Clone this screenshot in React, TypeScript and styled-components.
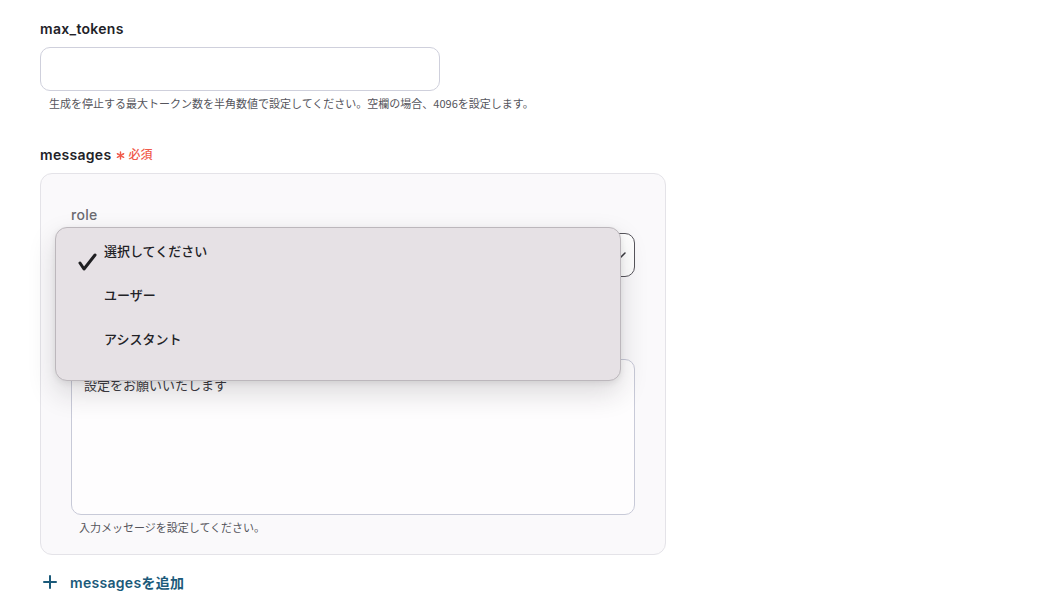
import React from "react";
import styled, { createGlobalStyle } from "styled-components";

const Global = createGlobalStyle`
  html, body { margin: 0; padding: 0; background: #ffffff; }
  body {
    font-family: Inter, "Noto Sans CJK JP", sans-serif;
    color: #222228;
    -webkit-font-smoothing: antialiased;
  }
  * { box-sizing: border-box; }
`;

const Page = styled.div`
  width: 1058px;
  height: 614px;
  overflow: hidden;
  padding: 20px 0 0 40px;
`;

const Field = styled.div<{ $gap?: number }>`
  display: flex;
  flex-direction: column;
  margin-bottom: ${(p) => p.$gap ?? 0}px;
`;

const Label = styled.div<{ $muted?: boolean }>`
  font-size: 14px;
  font-weight: ${(p) => (p.$muted ? 500 : 600)};
  color: ${(p) => (p.$muted ? "#6b6a70" : "#222228")};
  letter-spacing: 0.3px;
  line-height: 18px;
  display: flex;
  align-items: center;
  gap: 4px;
  margin-bottom: 9px;
`;

const Required = styled.span`
  color: #f05a4a;
  font-size: 12px;
  font-weight: 500;
  letter-spacing: 0;
  display: inline-flex;
  align-items: center;
  gap: 3px;
  margin-left: 1px;
`;

const Input = styled.div<{ $w: number }>`
  width: ${(p) => p.$w}px;
  height: 44px;
  border: 1px solid #cfd0dc;
  border-radius: 10px;
  background: #fff;
`;

const Help = styled.div<{ $indent: number }>`
  font-size: 11px;
  color: #55555c;
  line-height: 14px;
  margin-top: 5px;
  padding-left: ${(p) => p.$indent}px;
  font-family: "Noto Sans CJK JP", Inter, sans-serif;
`;

const Card = styled.div`
  width: 626px;
  background: #faf9fb;
  border: 1px solid #e4e3e8;
  border-radius: 12px;
  padding: 32px 30px 20px 30px;
  display: flex;
  flex-direction: column;
`;

const SelectWrap = styled.div`
  position: relative;
`;

const SelectBox = styled.div`
  width: 564px;
  height: 44px;
  border: 1px solid #57555c;
  border-radius: 10px;
  background: #fff;
  display: flex;
  align-items: center;
  justify-content: flex-end;
  padding-right: 6px;
`;

const Menu = styled.div`
  position: absolute;
  left: -16px;
  top: -6px;
  width: 566px;
  height: 154px;
  background: #e6e1e5;
  border: 1px solid #bcb7bc;
  border-radius: 12px;
  box-shadow: 0 12px 28px rgba(40, 30, 40, 0.16), 0 2px 6px rgba(0, 0, 0, 0.08);
  padding-top: 13px;
  display: flex;
  flex-direction: column;
  z-index: 5;
`;

const MenuItem = styled.div`
  height: 44px;
  display: flex;
  align-items: flex-start;
  padding-left: 48px;
  position: relative;
  font-size: 13px;
  font-weight: 500;
  color: #222226;
  line-height: 20px;
  font-family: "Noto Sans CJK JP", Inter, sans-serif;
`;

const Check = styled.svg`
  position: absolute;
  left: 20px;
  top: 10px;
`;

const TextArea = styled.div`
  width: 564px;
  height: 156px;
  border: 1px solid #c8cad8;
  border-radius: 10px;
  background: #fefdfe;
  padding: 15px 12px;
  font-size: 13px;
  color: #3a3a40;
  font-family: "Noto Sans CJK JP", Inter, sans-serif;
`;

const Spacer = styled.div<{ $h: number }>`
  height: ${(p) => p.$h}px;
`;

const AddButton = styled.div`
  display: flex;
  align-items: center;
  gap: 13px;
  margin-top: 17px;
  padding-left: 3px;
  color: #1b5a7a;
  font-size: 14px;
  font-weight: 600;
  letter-spacing: 0.3px;
`;

export default function App() {
  return (
    <>
      <Global />
      <Page>
        <Field $gap={36}>
          <Label>max_tokens</Label>
          <Input $w={400} />
          <Help $indent={9}>
            生成を停止する最大トークン数を半角数値で設定してください。空欄の場合、4096を設定します。
          </Help>
        </Field>

        <Label>
          messages
          <Required>
            <svg width="9" height="9" viewBox="0 0 10 10">
              <g stroke="#f05a4a" strokeWidth="1.6" strokeLinecap="round">
                <line x1="5" y1="1" x2="5" y2="9" />
                <line x1="1.5" y1="3" x2="8.5" y2="7" />
                <line x1="1.5" y1="7" x2="8.5" y2="3" />
              </g>
            </svg>
            必須
          </Required>
        </Label>

        <Card>
          <Label $muted>role</Label>
          <SelectWrap>
            <SelectBox>
              <svg width="16" height="16" viewBox="0 0 16 16">
                <polyline
                  points="3,6 8,11 13,6"
                  fill="none"
                  stroke="#3a3a40"
                  strokeWidth="1.5"
                  strokeLinecap="round"
                  strokeLinejoin="round"
                />
              </svg>
            </SelectBox>
            <Menu>
              <MenuItem>
                <Check width="22" height="22" viewBox="0 0 22 22">
                  <polyline
                    points="4,12 8,18 19,4"
                    fill="none"
                    stroke="#1f1f22"
                    strokeWidth="3"
                    strokeLinecap="round"
                    strokeLinejoin="round"
                  />
                </Check>
                選択してください
              </MenuItem>
              <MenuItem>ユーザー</MenuItem>
              <MenuItem>アシスタント</MenuItem>
            </Menu>
          </SelectWrap>
          <Spacer $h={82} />
          <TextArea>設定をお願いいたします</TextArea>
          <Help $indent={8}>入力メッセージを設定してください。</Help>
        </Card>

        <AddButton>
          <svg width="14" height="14" viewBox="0 0 14 14">
            <g stroke="#1b5a7a" strokeWidth="2" strokeLinecap="round">
              <line x1="7" y1="1" x2="7" y2="13" />
              <line x1="1" y1="7" x2="13" y2="7" />
            </g>
          </svg>
          messagesを追加
        </AddButton>
      </Page>
    </>
  );
}
